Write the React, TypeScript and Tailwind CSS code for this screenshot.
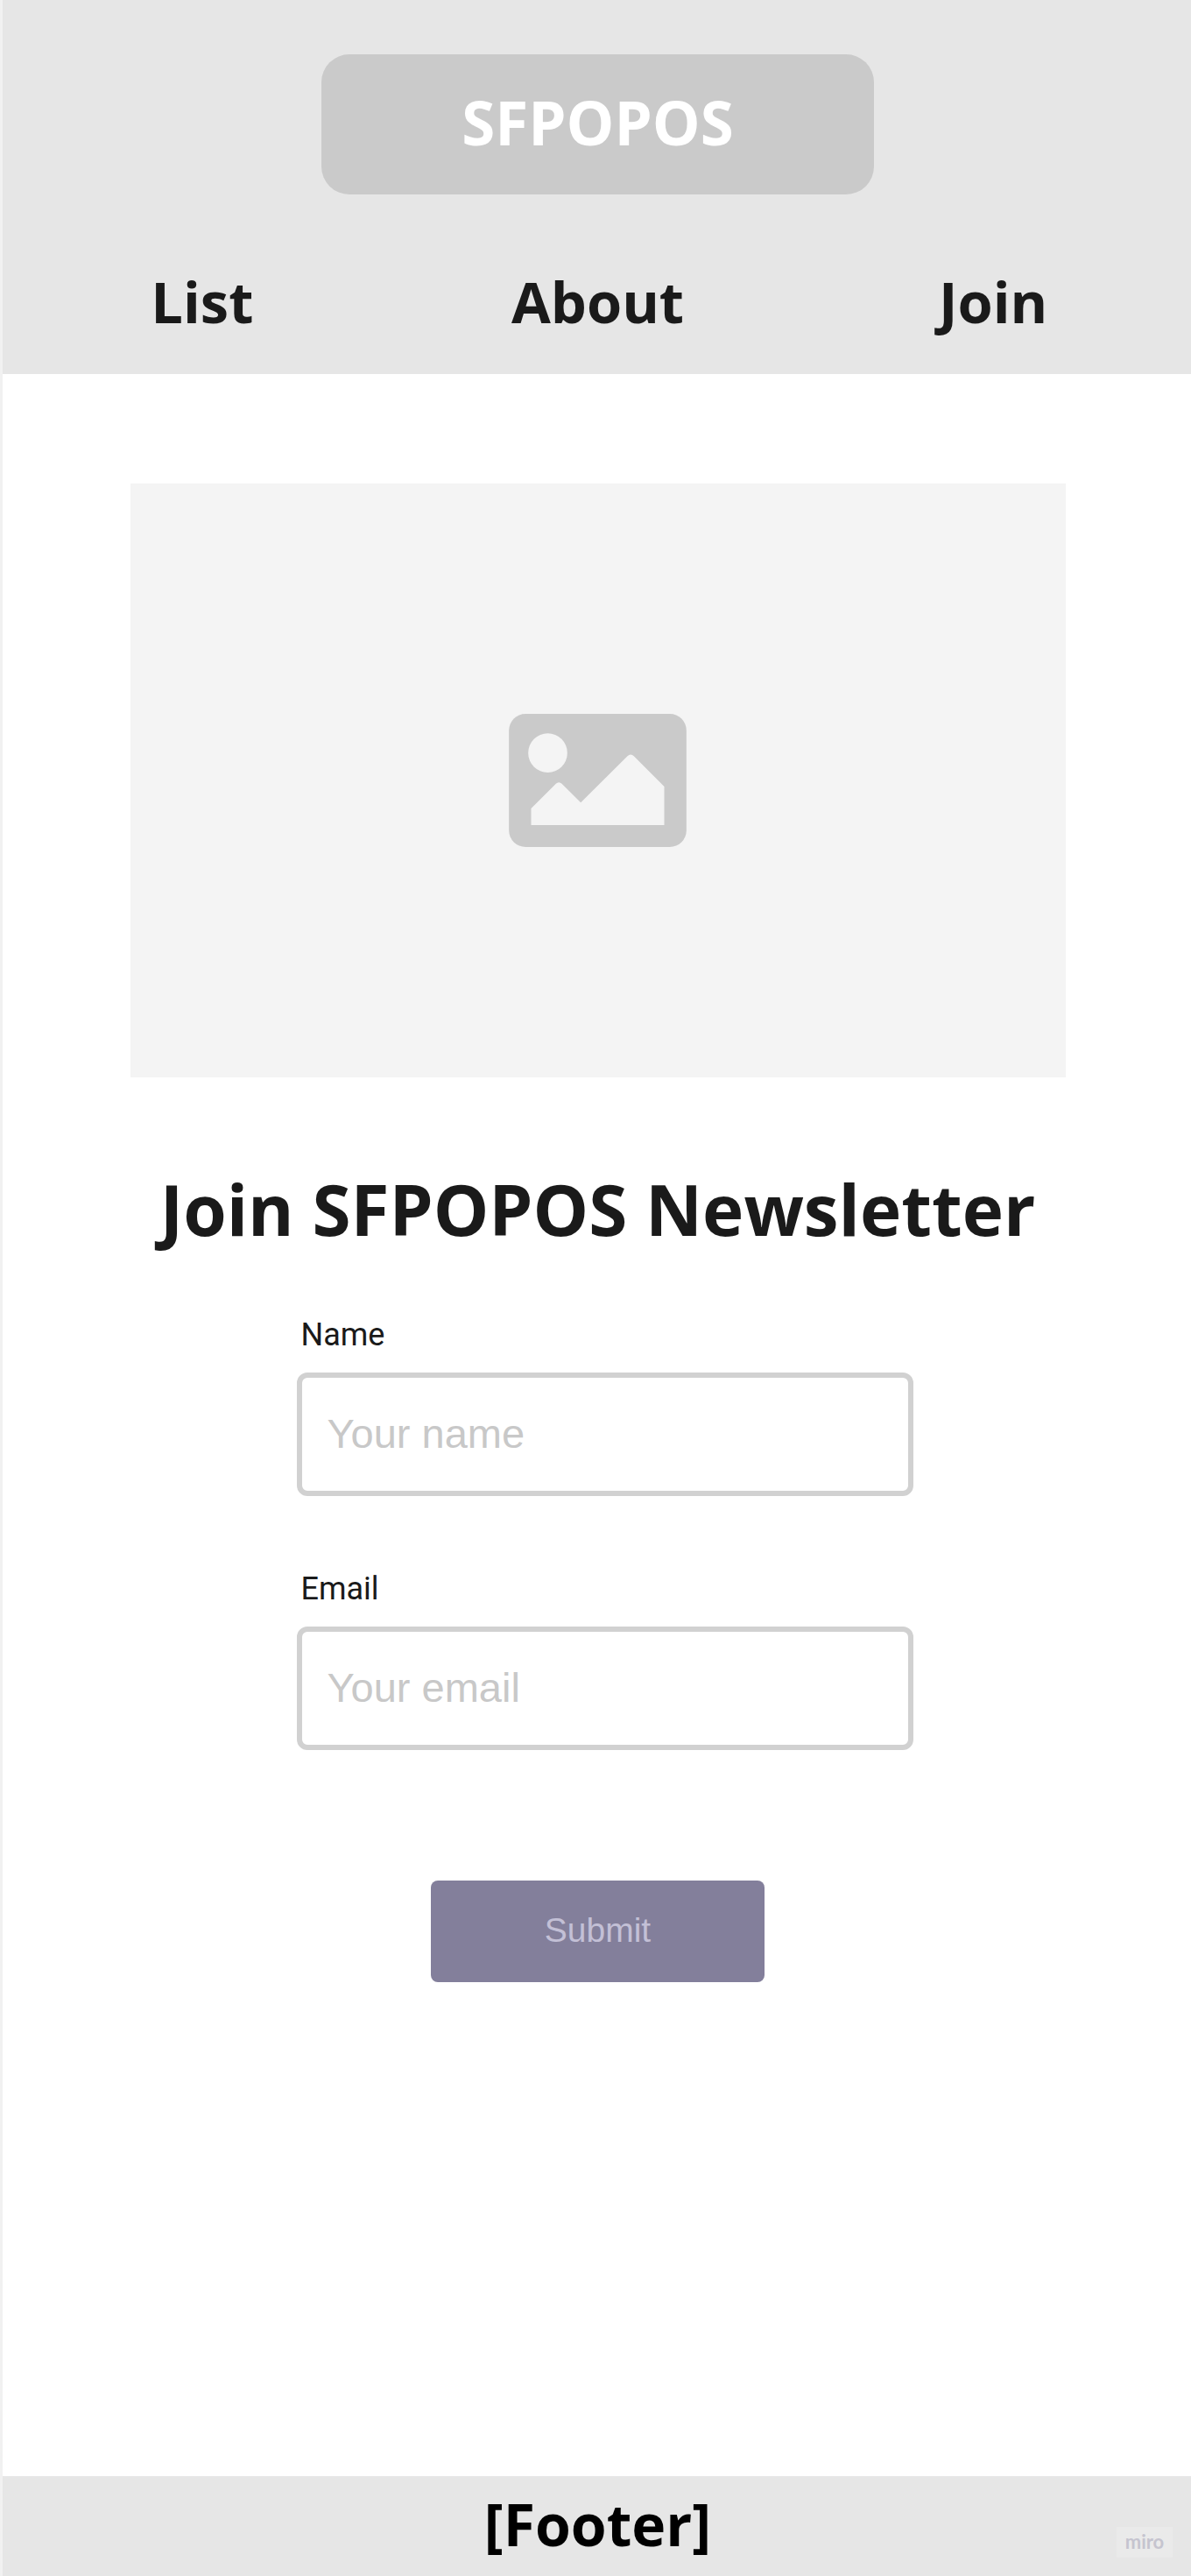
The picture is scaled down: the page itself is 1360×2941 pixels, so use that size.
import { useState } from "react";

const navItems = ["List", "About", "Join"];

function PictureIcon() {
  return (
    <svg viewBox="0 0 608 456" className="h-[152px] w-[203px]" aria-hidden="true">
      <rect width="608" height="456" rx="57" fill="#cacaca" />
      <circle cx="133" cy="134" r="67" fill="#f4f4f4" />
      <path
        d="M76 324 L161 239 Q171 230 181 239 L246 304 L406 145 Q417 134 428 145 L532 249 V381 H76 Z"
        fill="#f4f4f4"
      />
    </svg>
  );
}

type FieldProps = {
  id: string;
  label: string;
  type: string;
  placeholder: string;
  value: string;
  onChange: (value: string) => void;
};

function Field({ id, label, type, placeholder, value, onChange }: FieldProps) {
  return (
    <div className="flex flex-col gap-[21px]">
      <label
        htmlFor={id}
        className="pl-[5px] font-['Roboto',sans-serif] text-[36px] leading-[44px] text-[#1a1a1a]"
      >
        {label}
      </label>
      <input
        id={id}
        type={type}
        placeholder={placeholder}
        value={value}
        onChange={(e) => onChange(e.target.value)}
        className="h-[141px] w-full rounded-xl border-6 border-[#d1d1d1] bg-white px-[29px] pb-[3px] font-['Liberation_Sans',sans-serif] text-[47px] text-[#1a1a1a] placeholder:text-[#c8c8c8]"
      />
    </div>
  );
}

export default function App() {
  const [name, setName] = useState("");
  const [email, setEmail] = useState("");

  return (
    <div className="flex min-h-screen flex-col border-l-3 border-[#f1f1f1] bg-white font-['Open_Sans',sans-serif] text-[#1a1a1a]">
      <header className="flex flex-col items-center bg-[#e6e6e6] pt-[62px] pb-[38px] pl-[2px]">
        <a
          href="#home"
          className="flex h-[160px] w-full max-w-[631px] items-center justify-center rounded-[32px] bg-[#cacaca] pb-1.5 text-[69px] leading-[96px] font-bold text-white"
        >
          SFPOPOS
        </a>
        <nav className="mt-[77px] grid w-full grid-cols-3 text-center text-[65px] leading-[90px] font-bold">
          {navItems.map((item) => (
            <a key={item} href={`#${item.toLowerCase()}`}>
              {item}
            </a>
          ))}
        </nav>
      </header>

      <main className="flex flex-1 flex-col items-center pt-[125px] pb-24 pl-[2px]">
        <div
          role="img"
          aria-label="Image placeholder"
          className="flex h-[678px] w-full max-w-[1068px] items-center justify-center bg-[#f4f4f4]"
        >
          <PictureIcon />
        </div>
        <h1 className="mt-24 text-center text-[80px] leading-[108px] font-bold">
          Join SFPOPOS Newsletter
        </h1>
        <form
          className="mt-[68px] flex w-full max-w-[720px] flex-col"
          onSubmit={(e) => e.preventDefault()}
        >
          <div className="flex flex-col gap-[84px] pl-4">
            <Field id="name" label="Name" type="text" placeholder="Your name" value={name} onChange={setName} />
            <Field id="email" label="Email" type="email" placeholder="Your email" value={email} onChange={setEmail} />
          </div>
          <button
            type="submit"
            className="mt-[149px] h-[116px] w-full max-w-[381px] self-center rounded-lg bg-[#837f9b] pb-0.5 font-['Liberation_Sans',sans-serif] text-[39px] text-[#c3c0d6]"
          >
            Submit
          </button>
        </form>
      </main>

      <footer className="relative flex h-[114px] items-center justify-center bg-[#e6e6e6] pb-1.5 pl-[2px] text-[66px] leading-[90px] font-bold text-black">
        [Footer]
        <span className="absolute right-[21px] bottom-[21px] flex h-[35px] w-16 items-center justify-center bg-[#eaeaea] pb-px font-['Lato',sans-serif] text-[22px] leading-6 font-bold text-[#c5c4cf]">
          miro
        </span>
      </footer>
    </div>
  );
}
